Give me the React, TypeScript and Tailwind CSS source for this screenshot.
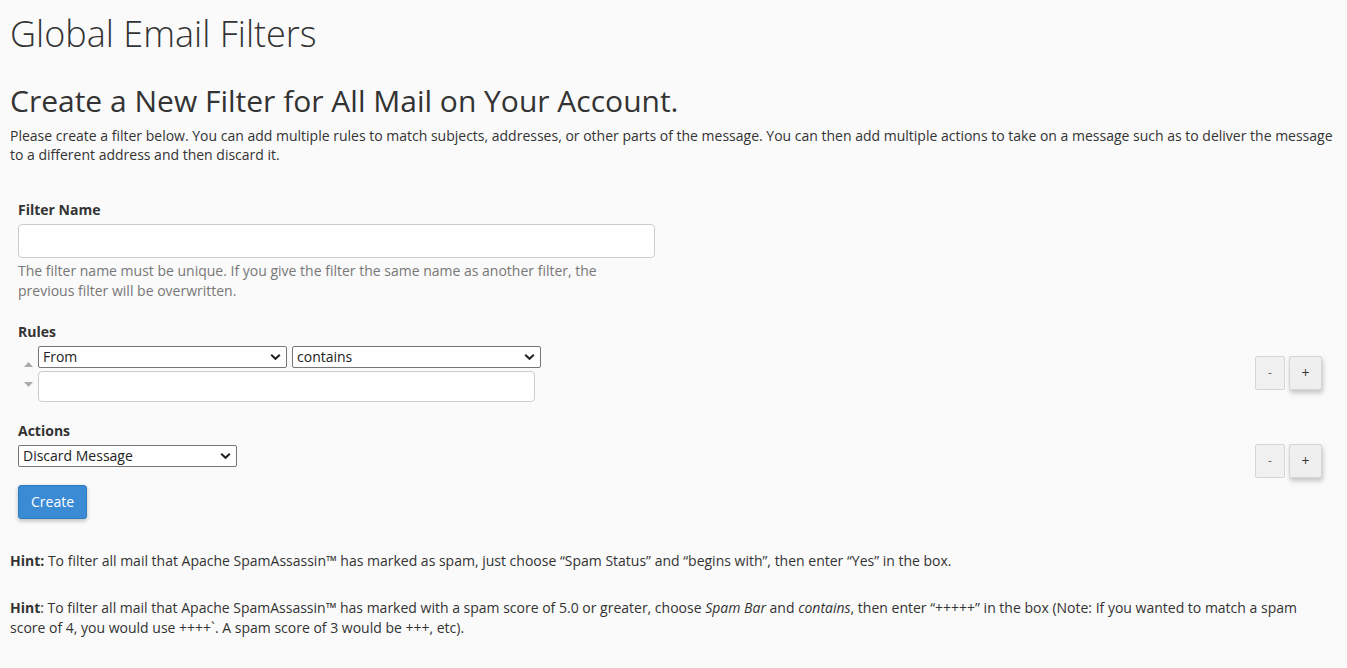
import React from "react";

function Chevron() {
  return (
    <svg className="pointer-events-none absolute right-[6px] top-1/2 -translate-y-1/2" width="11" height="7" viewBox="0 0 11 7">
      <polyline points="1.2,1.2 5.5,5.3 9.8,1.2" fill="none" stroke="#222" strokeWidth="2" />
    </svg>
  );
}

function Select({ value, width }: { value: string; width: string }) {
  return (
    <div className={`relative ${width} h-[22px] shrink-0`}>
      <div className="h-full w-full rounded-[2px] border border-[#767676] bg-white pl-[4px] text-[14px] leading-[20px] text-[#222]">
        {value}
      </div>
      <Chevron />
    </div>
  );
}

function PlusMinus({ className = "" }: { className?: string }) {
  return (
    <div className={`flex gap-[4px] ${className}`}>
      <button className="flex h-[34px] w-[30px] items-center justify-center rounded-[2px] border border-[#d5d5d5] bg-[#f0f0f0] text-[12px] text-[#666]">
        -
      </button>
      <button className="flex h-[34px] w-[33px] items-center justify-center rounded-[2px] border border-[#d5d5d5] bg-[#efefef] text-[14px] text-[#333] shadow-[1px_3px_5px_rgba(0,0,0,0.22)]">
        +
      </button>
    </div>
  );
}

export default function App() {
  return (
    <div className="min-h-[668px] bg-[#fafafa] pl-[10px] pr-[10px] font-['Open_Sans',sans-serif] text-[14px] leading-[20px] text-[#333]">
      <h1 className="pt-[14px] text-[36px] font-light leading-[40px] text-[#333]">Global Email Filters</h1>
      <h2 className="mt-[30px] text-[30px] font-normal leading-[34px] text-[#333]">
        Create a New Filter for All Mail on Your Account.
      </h2>
      <p className="mt-[8px] leading-[19px]">
        Please create a filter below. You can add multiple rules to match subjects, addresses, or other parts of the message. You can then add multiple actions to take on a message such as to deliver the message to a different address and then discard it.
      </p>

      <div className="mt-[36px] ml-[8px] mr-[15px]">
        <div className="font-bold">Filter Name</div>
        <div className="mt-[4px] h-[34px] w-[637px] rounded-[4px] border border-[#ccc] bg-white" />
        <div className="mt-[3px] w-[637px] text-[#777]">
          The filter name must be unique. If you give the filter the same name as another filter, the previous filter will be overwritten.
        </div>

        <div className="mt-[21px] font-bold">Rules</div>
        <div className="mt-[4px] flex items-center justify-between">
          <div className="flex">
            <div className="flex w-[20px] flex-col items-center pt-[16px]">
              <svg width="9" height="5" viewBox="0 0 9 5">
                <polygon points="0,5 4.5,0 9,5" fill="#aaa" />
              </svg>
              <svg className="mt-[15px]" width="9" height="5" viewBox="0 0 9 5">
                <polygon points="0,0 9,0 4.5,5" fill="#aaa" />
              </svg>
            </div>
            <div className="flex flex-col">
              <div className="flex gap-[5px]">
                <Select value="From" width="w-[249px]" />
                <Select value="contains" width="w-[249px]" />
              </div>
              <div className="mt-[3px] h-[31px] w-[497px] rounded-[4px] border border-[#ccc] bg-white" />
            </div>
          </div>
          <PlusMinus className="mt-[-3px]" />
        </div>

        <div className="mt-[19px] font-bold">Actions</div>
        <div className="mt-[3px] flex items-start justify-between">
          <div className="pt-[1px]">
            <Select value="Discard Message" width="w-[219px]" />
          </div>
          <PlusMinus />
        </div>

        <button className="mt-[7px] h-[34px] rounded-[3px] border border-[#2f7bbf] bg-[#3a8ad4] px-[12px] text-[14px] text-white shadow-[0_2px_4px_rgba(0,0,0,0.25)]">
          Create
        </button>
      </div>

      <p className="mt-[32px]">
        <b>Hint:</b> To filter all mail that Apache SpamAssassin™ has marked as spam, just choose “Spam Status” and “begins with”, then enter “Yes” in the box.
      </p>
      <p className="mt-[27px] pb-[30px] pr-[20px]">
        <b>Hint</b>: To filter all mail that Apache SpamAssassin™ has marked with a spam score of 5.0 or greater, choose <em>Spam Bar</em> and <em>contains</em>, then enter “+++++” in the box (Note: If you wanted to match a spam score of 4, you would use ++++`. A spam score of 3 would be +++, etc).
      </p>
    </div>
  );
}
